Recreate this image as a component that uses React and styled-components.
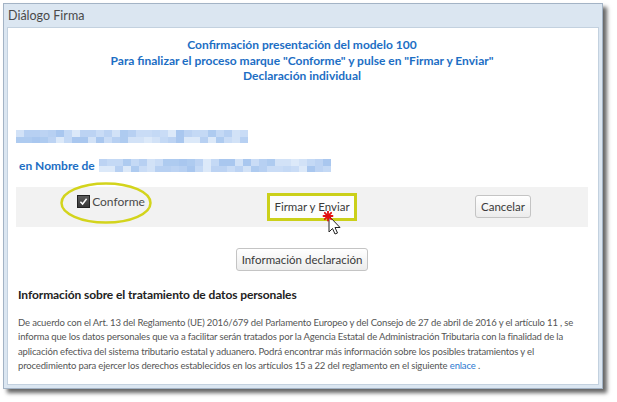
import React from "react";
import styled, { createGlobalStyle } from "styled-components";

const GlobalStyle = createGlobalStyle`
  html, body {
    margin: 0;
    padding: 0;
    background: #fff;
    font-family: Lato, "Noto Sans", sans-serif;
  }
`;

const shades = ["#a9c7ef", "#b7d0f2", "#c4d9f5", "#d2e2f7", "#bcd3f3", "#aecbf0", "#dce9f9", "#c9dcf6"];

const cellsFor = (seed, count) =>
  Array.from({ length: count }, (_, i) => shades[(i * 5 + seed * 3 + ((i * i) % 7)) % shades.length]);

const Mosaic = ({ seed, width }) => {
  const cols = Math.round(width / 8);
  return (
    <MosaicGrid $cols={cols} $width={width}>
      {cellsFor(seed, cols * 2).map((c, i) => (
        <MosaicCell key={i} $shade={c} />
      ))}
    </MosaicGrid>
  );
};

const Cursor = () => (
  <CursorSvg width="22" height="26" viewBox="0 0 22 26">
    <path d="M7 5 L7 21 L10.5 17.5 L13 23 L15.5 22 L13 16.5 L18 16.5 Z" fill="#fff" stroke="#222" strokeWidth="1" strokeLinejoin="round" />
    <g stroke="#e01010" strokeWidth="1.8" strokeLinecap="round">
      <line x1="6" y1="0.5" x2="6" y2="9.5" />
      <line x1="1.5" y1="5" x2="10.5" y2="5" />
      <line x1="2.8" y1="1.8" x2="9.2" y2="8.2" />
      <line x1="9.2" y1="1.8" x2="2.8" y2="8.2" />
    </g>
  </CursorSvg>
);

const App = () => {
  return (
    <>
      <GlobalStyle />
      <Page>
        <Dialog>
          <TitleBar>Diálogo Firma</TitleBar>
          <Body>
            <Header>
              <div>Confirmación presentación del modelo 100</div>
              <div>Para finalizar el proceso marque "Conforme" y pulse en "Firmar y Enviar"</div>
              <div>Declaración individual</div>
            </Header>

            <BlurRow $top={46}>
              <Mosaic seed={1} width={232} />
            </BlurRow>

            <BlurRow $top={16}>
              <NameLabel>en Nombre de</NameLabel>
              <Mosaic seed={4} width={232} />
            </BlurRow>

            <ActionBar>
              <CheckCell>
                <Highlight width="92" height="42" viewBox="0 0 92 42">
                  <ellipse cx="46" cy="21" rx="44.5" ry="19.5" fill="none" stroke="#d3d41c" strokeWidth="2.5" />
                </Highlight>
                <CheckBox>
                  <svg width="9" height="9" viewBox="0 0 9 9">
                    <path d="M1.4 4.8 L3.6 7 L7.6 1.8" fill="none" stroke="#fff" strokeWidth="1.5" />
                  </svg>
                </CheckBox>
                Conforme
              </CheckCell>
              <ButtonCell>
                <SendFrame>
                  <Button $flat>Firmar y Enviar</Button>
                  <Cursor />
                </SendFrame>
              </ButtonCell>
              <ButtonCell>
                <Button>Cancelar</Button>
              </ButtonCell>
            </ActionBar>

            <InfoRow>
              <Button>Información declaración</Button>
            </InfoRow>

            <SectionTitle>Información sobre el tratamiento de datos personales</SectionTitle>
            <Paragraph>
              De acuerdo con el Art. 13 del Reglamento (UE) 2016/679 del Parlamento Europeo y del Consejo de 27 de abril de 2016 y el artículo 11 , se
              <br />
              informa que los datos personales que va a facilitar serán tratados por la Agencia Estatal de Administración Tributaria con la finalidad de la
              <br />
              aplicación efectiva del sistema tributario estatal y aduanero. Podrá encontrar más información sobre los posibles tratamientos y el
              <br />
              procedimiento para ejercer los derechos establecidos en los artículos 15 a 22 del reglamento en el siguiente <TextLink href="#">enlace</TextLink> .
            </Paragraph>
          </Body>
        </Dialog>
      </Page>
    </>
  );
};

export default App;

const Page = styled.div`
  padding: 3px 0 0 3px;
  width: 617px;
  height: 402px;
  box-sizing: border-box;
`;

const Dialog = styled.div`
  width: 600px;
  height: 386px;
  box-sizing: border-box;
  display: flex;
  flex-direction: column;
  background: #dbe6f1;
  border: 1px solid #a3b3c5;
  padding: 0 3px 3px 3px;
  box-shadow: 4px 4px 4px rgba(0, 0, 0, 0.6);
`;

const TitleBar = styled.div`
  height: 23px;
  display: flex;
  align-items: center;
  padding-left: 1px;
  font-size: 12.5px;
  color: #4a4a4a;
`;

const Body = styled.div`
  flex: 1;
  background: #fff;
  border: 1px solid #c3d1df;
  padding: 0 10px 0 8px;
  display: flex;
  flex-direction: column;
`;

const Header = styled.div`
  padding-top: 9px;
  text-align: center;
  font-size: 12px;
  font-weight: 700;
  line-height: 15.5px;
  color: #1c6ec4;
`;

const BlurRow = styled.div`
  margin-top: ${(p) => p.$top}px;
  height: 13px;
  display: flex;
  align-items: center;
`;

const MosaicGrid = styled.div`
  width: ${(p) => p.$width}px;
  height: 13px;
  display: grid;
  grid-template-columns: repeat(${(p) => p.$cols}, 1fr);
  grid-template-rows: 7px 6px;
  filter: blur(0.4px);
`;

const MosaicCell = styled.div`
  background: ${(p) => p.$shade};
`;

const NameLabel = styled.span`
  font-size: 12px;
  font-weight: 700;
  color: #1c6ec4;
  padding-left: 3px;
  margin-right: 4px;
`;

const ActionBar = styled.div`
  margin-top: 15px;
  height: 40px;
  background: #f2f2f2;
  display: grid;
  grid-template-columns: 190px 212px 170px;
  align-items: center;
`;

const CheckCell = styled.div`
  position: relative;
  justify-self: center;
  align-self: start;
  margin-top: 7px;
  display: flex;
  align-items: center;
  gap: 2px;
  font-size: 12px;
  color: #4a4a4a;
`;

const Highlight = styled.svg`
  position: absolute;
  left: -17px;
  top: -12px;
  pointer-events: none;
`;

const CheckBox = styled.span`
  width: 11px;
  height: 11px;
  display: inline-flex;
  align-items: center;
  justify-content: center;
  background: linear-gradient(#5a5a5a, #383838);
  border: 1px solid #222;
`;

const ButtonCell = styled.div`
  display: flex;
  justify-content: center;
`;

const SendFrame = styled.div`
  position: relative;
  border: 3px solid #cbd01a;
  display: flex;
`;

const Button = styled.button`
  font-family: Lato, "Noto Sans", sans-serif;
  font-size: 11.5px;
  color: #3a3a3a;
  height: ${(p) => (p.$flat ? "22px" : "23px")};
  padding: 0 ${(p) => (p.$flat ? "4px" : "5px")};
  border: ${(p) => (p.$flat ? "none" : "1px solid #c4c4c4")};
  border-radius: ${(p) => (p.$flat ? "0" : "3px")};
  background: ${(p) => (p.$flat ? "#fdfdfd" : "linear-gradient(#ffffff, #ececec)")};
  box-shadow: ${(p) => (p.$flat ? "none" : "inset 0 1px 0 #fff")};
  cursor: pointer;
`;

const CursorSvg = styled.svg`
  position: absolute;
  left: 52px;
  top: 15px;
`;

const InfoRow = styled.div`
  margin-top: 21px;
  display: flex;
  justify-content: center;
`;

const SectionTitle = styled.div`
  margin-top: 16px;
  padding-left: 2px;
  font-size: 12px;
  font-weight: 700;
  letter-spacing: -0.1px;
  line-height: 16px;
  color: #222;
`;

const Paragraph = styled.p`
  margin: 13px 0 0;
  padding-left: 2px;
  font-size: 9.5px;
  letter-spacing: -0.15px;
  line-height: 14.5px;
  color: #555;
  white-space: nowrap;
`;

const TextLink = styled.a`
  color: #2a78cf;
  text-decoration: none;
`;
